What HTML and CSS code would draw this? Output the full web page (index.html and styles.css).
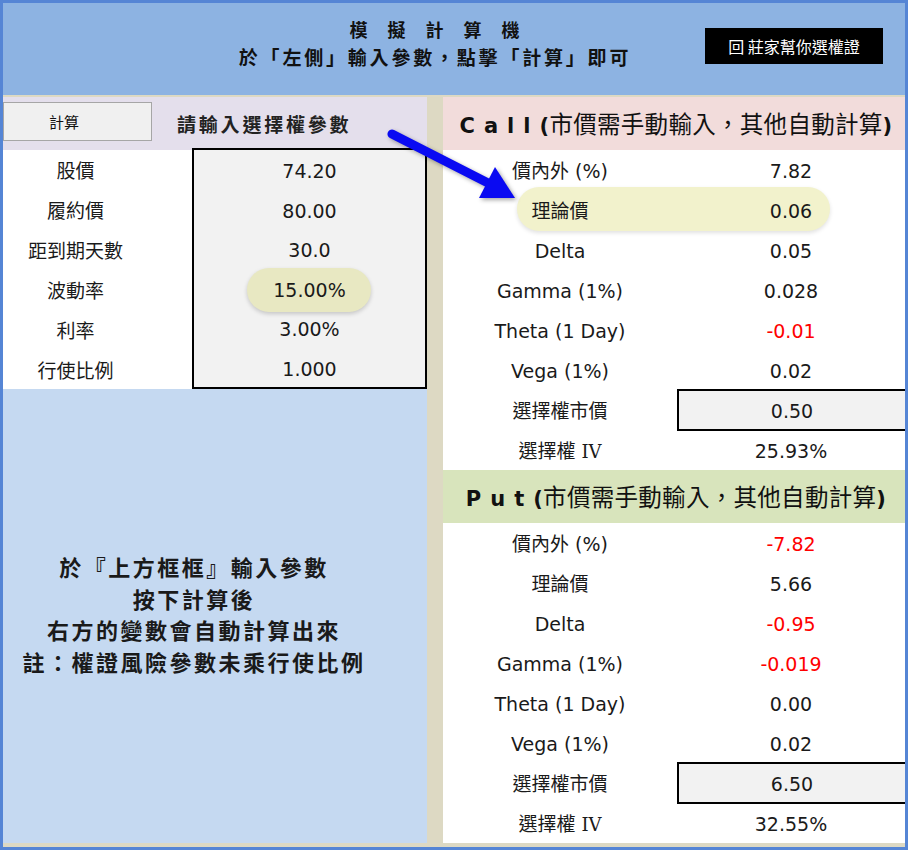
FILE: index.html
```html
<!DOCTYPE html>
<html lang="zh-Hant">
<head>
    <meta charset="UTF-8">
    <meta name="viewport" content="width=device-width, initial-scale=1.0">
    <title>模擬計算機</title>
    <link rel="stylesheet" href="styles.css">
</head>
<body>
    <div class="frame">
        <header class="top">
            <div class="titles">
                <div class="title">模　擬　計　算　機</div>
                <div class="subtitle">於「左側」輸入參數，點擊「計算」即可</div>
            </div>
            <a class="back-btn" href="#">回 莊家幫你選權證</a>
        </header>

        <div class="main">
            <section class="left">
                <div class="left-head">
                    <button type="button" class="calc-btn">計算</button>
                    <span class="left-title">請輸入選擇權參數</span>
                </div>
                <div class="params">
                    <div class="param-labels">
                        <div>股價</div>
                        <div>履約價</div>
                        <div>距到期天數</div>
                        <div>波動率</div>
                        <div>利率</div>
                        <div>行使比例</div>
                    </div>
                    <div class="param-box">
                        <div>74.20</div>
                        <div>80.00</div>
                        <div>30.0</div>
                        <div class="pill"><span>15.00%</span></div>
                        <div>3.00%</div>
                        <div>1.000</div>
                    </div>
                </div>
                <div class="note">
                    <p>於『上方框框』輸入參數</p>
                    <p>按下計算後</p>
                    <p>右方的變數會自動計算出來</p>
                    <p>註：權證風險參數未乘行使比例</p>
                </div>
            </section>

            <section class="right">
                <div class="opt-head call"><b class="spaced">Call</b><b>(</b>市價需手動輸入，其他自動計算<b>)</b></div>
                <div class="row"><span>價內外 (%)</span><span>7.82</span></div>
                <div class="row wide-pill"><span>理論價</span><span>0.06</span></div>
                <div class="row"><span>Delta</span><span>0.05</span></div>
                <div class="row"><span>Gamma (1%)</span><span>0.028</span></div>
                <div class="row"><span>Theta (1 Day)</span><span class="neg">-0.01</span></div>
                <div class="row"><span>Vega (1%)</span><span>0.02</span></div>
                <div class="row boxed"><span>選擇權市價</span><span>0.50</span></div>
                <div class="row"><span>選擇權 <i class="iv">IV</i></span><span>25.93%</span></div>

                <div class="opt-head put"><b class="spaced">Put</b><b>(</b>市價需手動輸入，其他自動計算<b>)</b></div>
                <div class="row"><span>價內外 (%)</span><span class="neg">-7.82</span></div>
                <div class="row"><span>理論價</span><span>5.66</span></div>
                <div class="row"><span>Delta</span><span class="neg">-0.95</span></div>
                <div class="row"><span>Gamma (1%)</span><span class="neg">-0.019</span></div>
                <div class="row"><span>Theta (1 Day)</span><span>0.00</span></div>
                <div class="row"><span>Vega (1%)</span><span>0.02</span></div>
                <div class="row boxed"><span>選擇權市價</span><span>6.50</span></div>
                <div class="row"><span>選擇權 <i class="iv">IV</i></span><span>32.55%</span></div>
            </section>
        </div>

        <!-- pointer from the input panel to the call price -->
        <svg class="arrow" width="150" height="95" viewBox="0 0 150 95">
            <line x1="12" y1="14" x2="110" y2="64" stroke="#0a0af2" stroke-width="9" stroke-linecap="round"/>
            <polygon points="115,47 135,78 99,78" fill="#0a0af2"/>
        </svg>
    </div>
</body>
</html>
```

FILE: styles.css
```css
body {
    margin: 0;
    font-family: 'DejaVu Sans', 'Noto Sans CJK TC', sans-serif;
    color: #1a1a1a;
}
.frame {
    position: relative;
    box-sizing: border-box;
    width: 908px;
    height: 850px;
    border: 3px solid #5585d5;
    background-color: #ddd9c3;
}

/* header */
.top {
    display: grid;
    height: 92px;
    background-color: #8db3e2;
}
.titles {
    grid-area: 1 / 1;
    padding: 13px 38px 0 0;
    text-align: center;
    font-family: 'Noto Sans CJK TC', sans-serif;
    font-weight: bold;
    font-size: 18px;
    line-height: 27px;
    color: #111;
}
.title {
    letter-spacing: 1px;
}
.subtitle {
    font-size: 19px;
    letter-spacing: 2.8px;
}
.back-btn {
    grid-area: 1 / 1;
    justify-self: end;
    align-self: start;
    margin: 25px 22px 0 0;
    width: 178px;
    height: 36px;
    line-height: 36px;
    text-align: center;
    background-color: #000;
    color: #fff;
    text-decoration: none;
    font-family: 'Noto Sans CJK TC', sans-serif;
    font-size: 16px;
}

.main {
    display: grid;
    grid-template-columns: 424px 462px;
    column-gap: 16px;
    margin-top: 2px;
    height: 746px;
}

/* left: parameters */
.left {
    display: flex;
    flex-direction: column;
}
.left-head {
    display: flex;
    align-items: flex-start;
    height: 53px;
    background-color: #e4dfec;
}
.calc-btn {
    margin-top: 5px;
    width: 149px;
    height: 39px;
    padding: 0 27px 0 0;
    border: 1px solid #a6a6a6;
    background-color: #f0f0f0;
    font-family: 'Noto Sans CJK TC', sans-serif;
    font-size: 15px;
    color: #111;
}
.left-title {
    margin: 13px 0 0 25px;
    font-family: 'Noto Sans CJK TC', sans-serif;
    font-weight: bold;
    font-size: 19px;
    letter-spacing: 2.8px;
    line-height: 28px;
    color: #222;
}
.params {
    display: flex;
    background-color: #fff;
}
.param-labels {
    width: 145px;
    margin-right: 44px;
}
.param-labels div {
    height: 40px;
    line-height: 42px;
    text-align: center;
    font-size: 19px;
}
.param-box {
    box-sizing: border-box;
    width: 235px;
    height: 241px;
    margin-top: -2px;
    padding-top: 1px;
    border: 2px solid #000;
    background-color: #f2f2f2;
}
.param-box div {
    position: relative;
    height: 39.5px;
    line-height: 41px;
    text-align: center;
    font-size: 19px;
}
.pill span {
    position: relative;
}
.pill::before {
    content: '';
    position: absolute;
    left: 53px;
    top: -2px;
    width: 124px;
    height: 44px;
    border-radius: 22px;
    background-color: #e8e8c2;
    box-shadow: 0 2px 4px rgba(0, 0, 0, 0.18);
}
.note {
    flex: 1;
    margin-top: -1px;
    padding: 162px 42px 0 0;
    background-color: #c5d9f1;
    text-align: center;
    font-family: 'Noto Sans CJK TC', sans-serif;
    font-weight: bold;
    font-size: 22px;
    letter-spacing: 2.5px;
    line-height: 31.5px;
    color: #1a1a1a;
}
.note p {
    margin: 0;
}

/* right: call / put results */
.right {
    background-color: #fff;
}
.opt-head {
    height: 53px;
    line-height: 52px;
    padding-left: 4px;
    text-align: center;
    font-family: 'Noto Sans CJK TC', sans-serif;
    font-size: 23.5px;
    letter-spacing: 0.3px;
    color: #111;
    white-space: nowrap;
}
.opt-head b {
    font-family: 'DejaVu Sans', sans-serif;
    font-size: 21px;
}
.opt-head .spaced {
    letter-spacing: 9px;
}
.call {
    background-color: #f2dcdb;
}
.put {
    background-color: #d8e4bc;
}
.row {
    position: relative;
    display: grid;
    grid-template-columns: 234px 228px;
    height: 40px;
    line-height: 42px;
    font-size: 19px;
    text-align: center;
}
.row span {
    position: relative;
}
.row .neg {
    color: #ff0000;
}
.iv {
    font-style: normal;
    font-family: 'DejaVu Serif', serif;
    font-size: 18px;
}
.boxed span:last-child {
    box-sizing: border-box;
    height: 42px;
    margin: -1px 0;
    line-height: 40px;
    border: 2px solid #000;
    border-right: none;
    background-color: #f2f2f2;
}
.wide-pill::before {
    content: '';
    position: absolute;
    left: 74px;
    top: -3px;
    width: 313px;
    height: 44px;
    border-radius: 22px;
    background-color: #f2f2cc;
    box-shadow: 0 2px 4px rgba(0, 0, 0, 0.12);
}

.arrow {
    position: absolute;
    left: 377px;
    top: 117px;
    filter: drop-shadow(2px 2px 2px rgba(0, 0, 0, 0.35));
}
```
